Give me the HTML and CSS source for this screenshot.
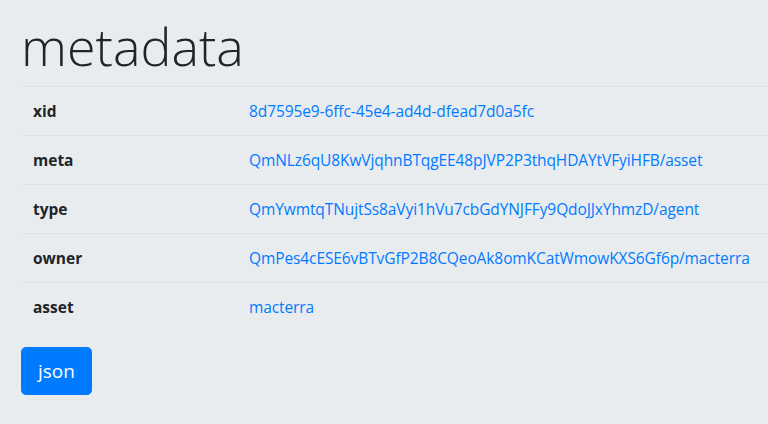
FILE: index.html
```html
<!DOCTYPE html>
<html>
<head>
<meta charset="utf-8">
<link rel="stylesheet" href="styles.css">
</head>
<body>
<div class="page">
  <h1 class="title">metadata</h1>
  <table class="meta-table">
    <colgroup><col class="col-key"><col class="col-val"></colgroup>
    <tbody>
      <tr><th>xid</th><td><a href="#">8d7595e9-6ffc-45e4-ad4d-dfead7d0a5fc</a></td></tr>
      <tr><th>meta</th><td><a href="#">QmNLz6qU8KwVjqhnBTqgEE48pJVP2P3thqHDAYtVFyiHFB/asset</a></td></tr>
      <tr><th>type</th><td><a href="#">QmYwmtqTNujtSs8aVyi1hVu7cbGdYNJFFy9QdoJJxYhmzD/agent</a></td></tr>
      <tr><th>owner</th><td><a href="#">QmPes4cESE6vBTvGfP2B8CQeoAk8omKCatWmowKXS6Gf6p/macterra</a></td></tr>
      <tr><th>asset</th><td><a href="#">macterra</a></td></tr>
    </tbody>
  </table>
  <button class="btn-json">json</button>
</div>
</body>
</html>
```

FILE: styles.css
```css
html, body {
  margin: 0;
  padding: 0;
  background: #e9ecef;
  overflow: hidden;
}
body {
  font-family: "Open Sans", "Noto Sans", sans-serif;
  font-size: 15.5px;
  line-height: 24px;
  color: #212529;
}
.page {
  padding: 11px 0 0 21px;
}
.title {
  margin: 0 0 8px 0;
  padding-top: 2px;
  height: 65px;
  font-size: 52px;
  font-weight: 300;
  line-height: 65px;
  color: #212529;
}
.meta-table {
  width: 100%;
  table-layout: fixed;
  border-collapse: collapse;
  margin-bottom: 16px;
}
.col-key { width: 216px; }
.meta-table th,
.meta-table td {
  padding: 12px;
  border-top: 1px solid #dee2e6;
  text-align: left;
  vertical-align: top;
  white-space: nowrap;
}
.meta-table th {
  font-weight: 700;
}
.meta-table td {
  letter-spacing: -0.1px;
}
.meta-table a {
  color: #007bff;
  text-decoration: none;
}
.btn-json {
  font-family: inherit;
  font-size: 19px;
  line-height: 30px;
  padding: 8px 16px;
  border: 1px solid #007bff;
  border-radius: 4.8px;
  background: #007bff;
  color: #fff;
}
```
